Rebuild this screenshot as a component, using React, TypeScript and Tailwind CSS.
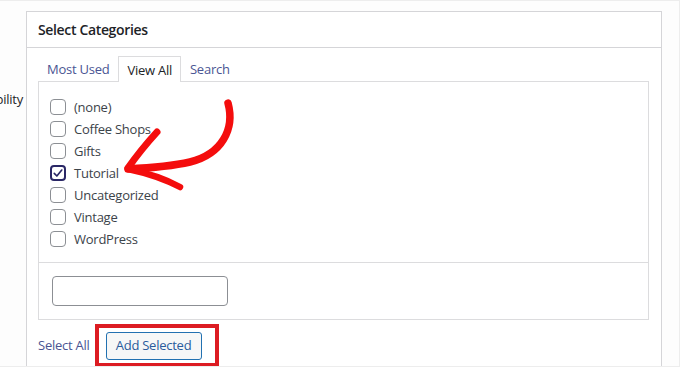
import React from 'react';

const categories = [
  { name: '(none)', checked: false },
  { name: 'Coffee Shops', checked: false },
  { name: 'Gifts', checked: false },
  { name: 'Tutorial', checked: true },
  { name: 'Uncategorized', checked: false },
  { name: 'Vintage', checked: false },
  { name: 'WordPress', checked: false },
];

function Checkbox({ checked }: { checked: boolean }) {
  if (checked) {
    return (
      <span className="flex h-4 w-4 items-center justify-center rounded-[4px] border-2 border-[#2a2766] bg-white">
        <svg viewBox="0 0 16 16" className="h-3 w-3">
          <path d="M3 8.5 L6.5 12 L13 4" fill="none" stroke="#2a2766" strokeWidth="2.2" strokeLinecap="round" strokeLinejoin="round" />
        </svg>
      </span>
    );
  }
  return <span className="block h-4 w-4 rounded-[4px] border border-[#8c8f94] bg-white" />;
}

export default function App() {
  return (
    <div
      className="relative flex h-[367px] w-[680px] overflow-hidden border-t border-r border-b border-[#ededed] bg-[#fdfdfd] text-[13px] tracking-[-0.25px] text-[#3c434a]"
      style={{ fontFamily: '"Open Sans", "Noto Sans", sans-serif' }}
    >
      {/* left column, partly hidden behind the viewport edge */}
      <div className="w-[26px] shrink-0 overflow-hidden">
        <div className="mt-[89px] flex justify-end pr-[3px] text-[#1d2327]">
          <span className="whitespace-nowrap">Visibility</span>
        </div>
      </div>

      {/* panel */}
      <div className="mt-[10px] flex w-[636px] shrink-0 flex-col border-t border-r border-l border-[#d5d5d8] bg-white">
        <div className="flex h-[36px] items-center border-b border-[#d5d5d8] pl-[11px] text-[14px] font-semibold tracking-[-0.35px] text-[#1d2327]">
          Select Categories
        </div>

        <div className="px-[11px] pr-[12px]">
          {/* tabs */}
          <div className="mt-[8px] flex h-[25px] items-stretch">
            <div className="flex items-center px-[9px] pt-[3px] text-[#4a5593]">Most Used</div>
            <div className="relative z-10 -mb-px flex items-center border-t border-r border-l border-[#dcdcde] bg-white px-[8px] pt-[3px] text-[#1d2327]">
              View All
            </div>
            <div className="flex items-center px-[9px] pt-[3px] text-[#4a5593]">Search</div>
          </div>

          {/* content box */}
          <div className="border border-[#dcdcde] bg-white">
            <ul className="pt-[14px] pb-[12px] pl-[11px]">
              {categories.map((c) => (
                <li key={c.name} className="flex h-[22px] items-center gap-[8px]">
                  <Checkbox checked={c.checked} />
                  <span className="leading-none">{c.name}</span>
                </li>
              ))}
            </ul>
            <div className="border-t border-[#dcdcde] px-[13px] py-[13px]">
              <div className="h-[30px] w-[176px] rounded-[4px] border border-[#8c8f94] bg-white" />
            </div>
          </div>

          {/* actions */}
          <div className="mt-[12px] flex items-center">
            <span className="text-[#4a5593]">Select All</span>
            <div className="relative ml-[16px]">
              <button className="h-[28px] w-[96px] rounded-[3px] border border-[#2271b1] bg-[#f6f7f7] text-[13px] tracking-[-0.25px] text-[#2a5b9c]">
                Add Selected
              </button>
              <div className="pointer-events-none absolute -top-[8px] -right-[17px] -bottom-[7px] -left-[11px] border-[4px] border-[#dc1c22]" />
            </div>
          </div>
        </div>
      </div>

      {/* annotation arrow */}
      <svg className="pointer-events-none absolute top-0 left-0" width="680" height="367" viewBox="0 0 680 367">
        <g fill="none" stroke="#f40d0d" strokeLinecap="round" strokeLinejoin="round">
          <path d="M228 102 C235 128 222 153 190 161 C168 166 148 167 128 168" strokeWidth="7.5" />
          <path d="M157 131 C147 142 137 154 128 167" strokeWidth="7" />
          <path d="M128 168 C147 172 165 178 180 186" strokeWidth="6.5" />
        </g>
      </svg>
    </div>
  );
}
